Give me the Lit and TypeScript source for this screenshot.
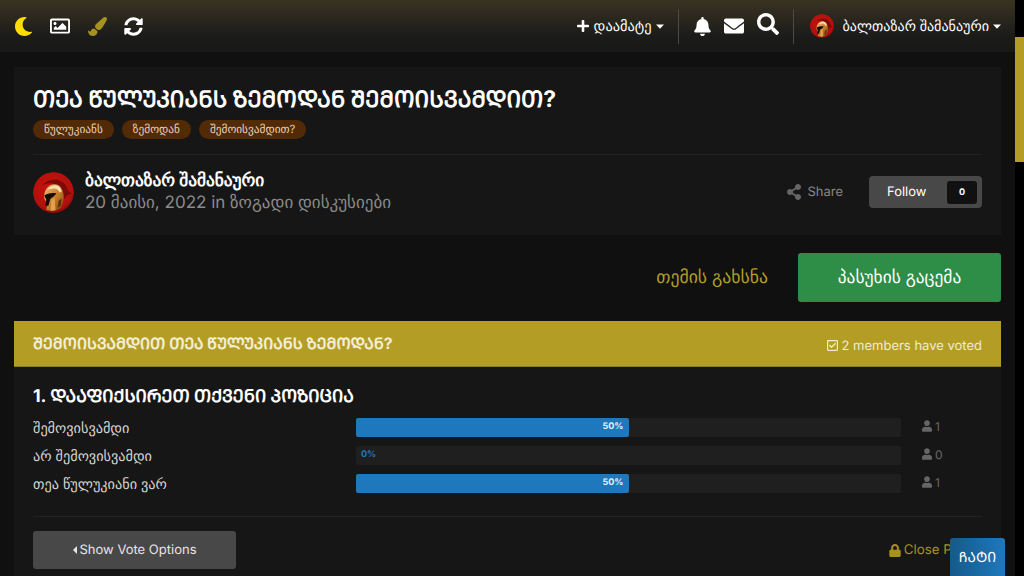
import { LitElement, html, css, svg } from "lit";
import { customElement } from "lit/decorators.js";

const P = {
  moon: ["0 0 512 512", "M283.211 512c78.962 0 151.079-35.925 198.857-94.792 7.068-8.708-.639-21.43-11.562-19.35-124.203 23.654-238.262-71.576-238.262-196.954 0-72.222 38.662-138.635 101.498-174.394 9.686-5.512 7.25-20.197-3.756-22.23A258.156 258.156 0 0 0 283.211 0c-141.309 0-256 114.511-256 256 0 141.309 114.511 256 256 256z"],
  image: ["0 0 512 512", "M464 64H48C21.49 64 0 85.49 0 112v288c0 26.51 21.49 48 48 48h416c26.51 0 48-21.49 48-48V112c0-26.51-21.49-48-48-48zm-6 336H54a6 6 0 0 1-6-6V118a6 6 0 0 1 6-6h404a6 6 0 0 1 6 6v276a6 6 0 0 1-6 6zM128 152c-22.091 0-40 17.909-40 40s17.909 40 40 40 40-17.909 40-40-17.909-40-40-40zM96 352h320v-80l-87.515-87.515c-4.686-4.686-12.284-4.686-16.971 0L192 304l-39.515-39.515c-4.686-4.686-12.284-4.686-16.971 0L96 304v48z"],
  brush: ["0 0 512 512", "M167.02 309.34c-40.12 2.58-76.53 17.86-97.19 72.3-2.35 6.21-8 9.98-14.59 9.98-11.11 0-45.46-27.67-55.25-34.35C0 439.62 37.93 512 128 512c75.86 0 128-43.77 128-120.19 0-3.11-.65-6.08-.97-9.13l-88.01-73.34zM457.89 0c-15.16 0-29.37 6.71-40.21 16.45C213.27 199.05 192 203.34 192 257.09c0 13.7 3.25 26.76 8.73 38.7l63.82 53.18c7.21 1.8 14.64 3.03 22.39 3.03 62.11 0 98.11-45.47 211.16-256.46 7.38-14.35 13.9-29.85 13.9-45.99C512 20.64 486 0 457.89 0z"],
  sync: ["0 0 512 512", "M370.72 133.28C339.458 104.008 298.888 87.962 255.848 88c-77.458.068-144.328 53.178-162.791 126.85-1.344 5.363-6.122 9.15-11.651 9.15H24.103c-7.498 0-13.194-6.807-11.807-14.176C33.933 94.924 134.813 8 256 8c66.448 0 126.791 26.136 171.315 68.685L463.03 40.97C478.149 25.851 504 36.559 504 57.941V192c0 13.255-10.745 24-24 24H345.941c-21.382 0-32.09-25.851-16.971-40.971l41.75-41.749zM32 296h134.059c21.382 0 32.09 25.851 16.971 40.971l-41.75 41.75c31.262 29.273 71.835 45.319 114.876 45.28 77.418-.07 144.315-53.144 162.787-126.849 1.344-5.363 6.122-9.15 11.651-9.15h57.304c7.498 0 13.194 6.807 11.807 14.176C478.067 417.076 377.187 504 256 504c-66.448 0-126.791-26.136-171.315-68.685L48.97 471.03C33.851 486.149 8 475.441 8 454.059V320c0-13.255 10.745-24 24-24z"],
  plus: ["0 0 448 512", "M416 208H272V64c0-17.67-14.33-32-32-32h-32c-17.67 0-32 14.33-32 32v144H32c-17.67 0-32 14.33-32 32v32c0 17.67 14.33 32 32 32h144v144c0 17.67 14.33 32 32 32h32c17.67 0 32-14.33 32-32V304h144c17.67 0 32-14.33 32-32v-32c0-17.67-14.33-32-32-32z"],
  bell: ["0 0 448 512", "M224 512c35.32 0 63.97-28.65 63.97-64H160.03c0 35.35 28.65 64 63.97 64zm215.39-149.71c-19.32-20.76-55.47-51.99-55.47-154.29 0-77.7-54.48-139.9-127.94-155.16V32c0-17.67-14.32-32-31.98-32s-31.98 14.33-31.98 32v20.84C118.56 68.1 64.08 130.3 64.08 208c0 102.3-36.15 133.53-55.47 154.29-6 6.45-8.66 14.16-8.61 21.71.11 16.4 12.98 32 32.1 32h383.8c19.12 0 32-15.6 32.1-32 .05-7.55-2.61-15.27-8.61-21.71z"],
  env: ["0 0 512 512", "M502.3 190.8c3.9-3.1 9.7-.2 9.7 4.7V400c0 26.5-21.5 48-48 48H48c-26.5 0-48-21.5-48-48V195.6c0-5 5.7-7.8 9.7-4.7 22.4 17.4 52.1 39.5 154.1 113.6 21.1 15.4 56.7 47.8 92.2 47.6 35.7.3 72-32.8 92.3-47.6 102-74.1 131.6-96.3 154-113.7zM256 320c23.2.4 56.6-29.2 73.4-41.4 132.7-96.3 142.8-104.7 173.4-128.7 5.8-4.5 9.2-11.5 9.2-18.9v-19c0-26.5-21.5-48-48-48H48C21.5 64 0 85.5 0 112v19c0 7.4 3.4 14.3 9.2 18.9 30.6 23.9 40.7 32.4 173.4 128.7 16.8 12.2 50.2 41.8 73.4 41.4z"],
  search: ["0 0 512 512", "M505 442.7L405.3 343c-4.5-4.5-10.6-7-17-7H372c27.6-35.3 44-79.7 44-128C416 93.1 322.9 0 208 0S0 93.1 0 208s93.1 208 208 208c48.3 0 92.7-16.4 128-44v16.3c0 6.4 2.5 12.5 7 17l99.7 99.7c9.4 9.4 24.6 9.4 33.9 0l28.3-28.3c9.4-9.4 9.4-24.6.1-34zM208 336c-70.7 0-128-57.2-128-128 0-70.7 57.2-128 128-128 70.7 0 128 57.2 128 128 0 70.7-57.2 128-128 128z"],
  share: ["0 0 448 512", "M352 320c-22.608 0-43.387 7.819-59.79 20.895l-102.486-64.054a96.551 96.551 0 0 0 0-41.683l102.486-64.054C308.613 184.181 329.392 192 352 192c53.019 0 96-42.981 96-96S405.019 0 352 0s-96 42.981-96 96c0 7.158.79 14.13 2.276 20.841L155.79 180.895C139.387 167.819 118.608 160 96 160c-53.019 0-96 42.981-96 96s42.981 96 96 96c22.608 0 43.387-7.819 59.79-20.895l102.486 64.054A96.301 96.301 0 0 0 256 416c0 53.019 42.981 96 96 96s96-42.981 96-96-42.981-96-96-96z"],
  user: ["0 0 448 512", "M224 256c70.7 0 128-57.3 128-128S294.7 0 224 0 96 57.3 96 128s57.3 128 128 128zm89.6 32h-16.7c-22.2 10.2-46.9 16-72.9 16s-50.6-5.8-72.9-16h-16.7C60.2 288 0 348.2 0 422.4V464c0 26.5 21.5 48 48 48h352c26.5 0 48-21.5 48-48v-41.6c0-74.2-60.2-134.4-134.4-134.4z"],
  lock: ["0 0 448 512", "M400 224h-24v-72C376 68.2 307.8 0 224 0S72 68.2 72 152v72H48c-26.5 0-48 21.5-48 48v192c0 26.5 21.5 48 48 48h352c26.5 0 48-21.5 48-48V272c0-26.5-21.5-48-48-48zm-104 0H152v-72c0-39.7 32.3-72 72-72s72 32.3 72 72v72z"],
  check: ["0 0 448 512", "M400 32H48C21.49 32 0 53.49 0 80v352c0 26.51 21.49 48 48 48h352c26.51 0 48-21.49 48-48V80c0-26.51-21.49-48-48-48zm0 400H48V80h352v352zm-35.864-241.724L191.547 361.48c-4.705 4.667-12.303 4.637-16.97-.068l-90.781-91.516c-4.667-4.705-4.637-12.303.069-16.971l22.719-22.536c4.705-4.667 12.303-4.637 16.97.069l59.792 60.277 141.352-140.216c4.705-4.667 12.303-4.637 16.97.068l22.536 22.718c4.667 4.706 4.637 12.304-.068 16.971z"],
} as const;

const icon = (n: keyof typeof P, cls: string) =>
  html`<svg class="i ${cls}" viewBox=${P[n][0]} fill="currentColor"><path d=${P[n][1]}></path></svg>`;

const caret = (cls = "") =>
  html`<svg class="caret ${cls}" viewBox="0 0 8 5" fill="currentColor"><path d="M0 .4h8L4 4.8z"></path></svg>`;

let uid = 0;
const avatar = (cls: string) => {
  const id = `av${uid++}`;
  return html`<svg class="avatar ${cls}" viewBox="0 0 40 40">
    <defs>
      <radialGradient id="${id}r" cx="0.45" cy="0.4" r="0.65"><stop offset="0" stop-color="#c9140e"></stop><stop offset="0.8" stop-color="#b0100c"></stop><stop offset="1" stop-color="#6e0a08"></stop></radialGradient>
      <linearGradient id="${id}g" x1="0" y1="0" x2="1" y2="1"><stop offset="0" stop-color="#eec080"></stop><stop offset="0.55" stop-color="#c47a28"></stop><stop offset="1" stop-color="#7d3f10"></stop></linearGradient>
    </defs>
    <circle cx="20" cy="20" r="20" fill="url(#${id}r)"></circle>
    ${svg`<path d="M9 13c6-7 17-8 23 0l3 6 3 2-5 2-2 3-3-1c1-6-1-11-6-13-4-2-9-1-13 1z" fill="#7c0b08"></path>
    <path d="M11 26c-1-8 4-14 10-14 6 0 9 6 9 13l-1 5-2 5-6 3-8-1 1-6z" fill="url(#${id}g)"></path>
    <path d="M14 17c2-3 5-4 8-4 3 0 5 2 6 6l-2 1c-1-3-3-4-6-4z" fill="#f6dfae"></path>
    <path d="M11 23c3-2 7-3 12-2l-3 3-3 2-2 7h-3l1-6z" fill="#170b06"></path>
    <path d="M18 27l3-2 1 12-5 1z" fill="#e0a050"></path>
    <path d="M25 28l3-2-1 7-3 2z" fill="#5e2e0c"></path>`}
  </svg>`;
};

@customElement("app-root")
export class AppRoot extends LitElement {
  static styles = css`
    :host { display: block; width: 1024px; height: 576px; overflow: hidden; position: relative; background: #000;
      font-family: Inter, sans-serif; color: #fff; text-rendering: geometricPrecision; }
    .shell { display: flex; height: 576px; }
    .page { width: 1015px; height: 576px; background: #101010; overflow: hidden; flex: none; }
    .bar { width: 9px; flex: none; background: #000; }
    .thumb { margin-top: 37px; height: 125px; background: #b49d25; }
    .i { display: block; flex: none; }
    .caret { display: block; flex: none; width: 8px; height: 5px; }

    nav { height: 52px; display: flex; align-items: center; padding: 0 14px 0 14px;
      background: linear-gradient(#3a3322 0%, #1b1b1a 70%, #181818 100%); box-sizing: border-box; }
    .left { display: flex; align-items: center; }
    .moon { width: 19px; height: 19px; color: #ffdd00; margin-right: 17px; }
    .img { width: 20px; height: 20px; margin-right: 18px; }
    .brush { width: 19px; height: 19px; color: #a8921f; margin-right: 17px; }
    .sync { width: 19px; height: 19px; }
    .right { margin-left: auto; display: flex; align-items: center; }
    .add { display: flex; align-items: center; font-size: 14.4px; }
    .plus { width: 12px; height: 14px; margin-right: 5px; }
    .add .caret, .me .caret { margin-left: 4px; }
    .sep { width: 1px; height: 35px; background: #4a4a47; margin: 0 15px 0 14px; }
    .bell { width: 17px; height: 19px; margin-right: 13px; }
    .env { width: 20px; height: 20px; margin-right: 13px; }
    .search { width: 22px; height: 22px; margin-top: -4px; }
    .nav-av { width: 24px; height: 24px; margin: 0 9px 0 1px; }
    .avatar { display: block; flex: none; border-radius: 50%; }
    .me { font-size: 14.1px; display: flex; align-items: center; font-weight: 500; }

    main { padding: 15px 14px 0; }
    .card { background: #161616; padding: 16px 19px 0; height: 168px; box-sizing: border-box; }
    h1 { margin: 0; font-size: 22.9px; line-height: 32px; font-weight: 700; }
    .tags { display: flex; gap: 8px; margin-top: 5px; }
    .tag { height: 19px; line-height: 19px; padding: 0 11px; background: #522a06; color: #e6d3bd; border-radius: 10px; font-size: 11.3px; }
    .author { margin-top: 15px; border-top: 1px solid #222; padding-top: 14px; display: flex; align-items: center; }
    .big-av { width: 41px; height: 41px; margin-right: 11px; }
    .name { font-size: 17.3px; line-height: 22px; padding-top: 1px; font-weight: 600; }
    .date { font-size: 17px; line-height: 23px; color: #8a8a8a; }
    .actions { margin-left: auto; display: flex; align-items: center; }
    .share { display: flex; align-items: center; font-size: 13px; color: #888; margin-right: 26px; }
    .share .i { width: 14px; height: 16px; margin-right: 6px; color: #666; }
    .follow { width: 113px; height: 32px; background: #484848; border-radius: 4px; display: flex; align-items: center;
      justify-content: space-between; padding: 0 5px 0 18px; box-sizing: border-box; font-size: 13px; }
    .count { width: 30px; height: 23px; background: #111; border-radius: 3px; text-align: center; line-height: 23px; font-size: 9px; font-weight: 700; }

    .reply-row { display: flex; justify-content: flex-end; align-items: center; margin-top: 18px; height: 49px; }
    .link { color: #b49d25; font-size: 17.7px; margin-right: 30px; }
    .reply { width: 203px; height: 49px; border-radius: 3px; background: #2e8d47; display: flex; align-items: center; justify-content: center; font-size: 17.4px; }

    .poll { margin-top: 19px; background: #161616; height: 300px; }
    .poll-head { height: 46px; background: #b49d25; display: flex; align-items: center; justify-content: space-between; padding: 0 19px; box-sizing: border-box;
      border-bottom: 1px solid #8f7c1c; }
    .poll-head h2 { margin: 0; font-size: 15.74px; font-weight: 700; color: #f3efd6; margin-top: -2px; }
    .voted { display: flex; align-items: center; font-size: 13px; color: #f0ecd0; margin-top: 4px; }
    .voted .i { width: 11px; height: 13px; margin-right: 4px; }
    .poll-body { padding: 17px 19px 0; }
    h3 { margin: 0; font-size: 17.67px; line-height: 26px; font-weight: 700; }
    .rows { margin-top: 8px; display: grid; gap: 9px; }
    .row { display: grid; grid-template-columns: 323px 545px 1fr; align-items: center; height: 19px; font-size: 14.25px; color: #d4d4d4; }
    .label { padding-top: 2px; }
    .track { height: 19px; background: #1f1f1f; border-radius: 2px; position: relative; }
    .fill { height: 19px; background: #1f78bc; border-radius: 2px; display: flex; justify-content: flex-end; align-items: center; padding: 0 5px 2px 0; box-sizing: border-box;
      font-size: 9px; font-weight: 700; color: #e7eef4; }
    .zero { height: 19px; padding: 0 0 2px 5px; box-sizing: border-box; display: flex; align-items: center; font-size: 9px; font-weight: 700; color: #1f78bc; }
    .votes { display: flex; align-items: center; padding-left: 21px; margin-top: -3px; color: #666; font-size: 12px; }
    .votes .i { width: 10px; height: 12px; margin-right: 3px; }
    .foot { margin-top: 23px; border-top: 1px solid #222; padding-top: 14px; display: flex; justify-content: space-between; align-items: center; }
    .vote-btn { width: 203px; height: 38px; background: #484848; border-radius: 3px; display: flex; align-items: center; justify-content: center; font-size: 13px; color: #e6e6e6; }
    .vote-btn svg { width: 4px; height: 8px; margin-right: 3px; }
    .close { display: flex; align-items: center; color: #a8921f; font-size: 13.3px; margin-right: 16px; }
    .close .i { width: 12px; height: 13px; margin-right: 3px; }

    .chat { position: absolute; left: 950px; top: 538px; width: 55px; height: 38px; border-radius: 3px 3px 0 0;
      background: linear-gradient(90deg, #155a8a, #1f78bc); display: flex; align-items: center; justify-content: center;
      font-size: 14px; }
  `;

  row(label: string, pct: number, votes: number) {
    return html`<div class="row">
      <div class="label">${label}</div>
      <div class="track">
        ${pct
          ? html`<div class="fill" style="width:${pct}%">${pct}%</div>`
          : html`<div class="zero">0%</div>`}
      </div>
      <div class="votes">${icon("user", "")}${votes}</div>
    </div>`;
  }

  render() {
    return html`
      <div class="shell">
        <div class="page">
          <nav>
            <div class="left">
              ${icon("moon", "moon")}${icon("image", "img")}${icon("brush", "brush")}${icon("sync", "sync")}
            </div>
            <div class="right">
              <div class="add">${icon("plus", "plus")}დაამატე${caret()}</div>
              <div class="sep"></div>
              ${icon("bell", "bell")}${icon("env", "env")}${icon("search", "search")}
              <div class="sep"></div>
              <div class="me">${avatar("nav-av")}ბალთაზარ შამანაური${caret()}</div>
            </div>
          </nav>
          <main>
            <section class="card">
              <h1>ᲗᲔᲐ ᲬᲣᲚᲣᲙᲘᲐᲜᲡ ᲖᲔᲛᲝᲓᲐᲜ ᲨᲔᲛᲝᲘᲡᲕᲐᲛᲓᲘᲗ?</h1>
              <div class="tags">
                <span class="tag">წულუკიანს</span><span class="tag">ზემოდან</span><span class="tag">შემოისვამდით?</span>
              </div>
              <div class="author">
                ${avatar("big-av")}
                <div>
                  <div class="name">ბალთაზარ შამანაური</div>
                  <div class="date">20 მაისი, 2022 in ზოგადი დისკუსიები</div>
                </div>
                <div class="actions">
                  <div class="share">${icon("share", "")}Share</div>
                  <div class="follow">Follow<span class="count">0</span></div>
                </div>
              </div>
            </section>
            <div class="reply-row">
              <span class="link">თემის გახსნა</span>
              <div class="reply">პასუხის გაცემა</div>
            </div>
            <section class="poll">
              <div class="poll-head">
                <h2>ᲨᲔᲛᲝᲘᲡᲕᲐᲛᲓᲘᲗ ᲗᲔᲐ ᲬᲣᲚᲣᲙᲘᲐᲜᲡ ᲖᲔᲛᲝᲓᲐᲜ?</h2>
                <div class="voted">${icon("check", "")}2 members have voted</div>
              </div>
              <div class="poll-body">
                <h3>1. ᲓᲐᲐᲤᲘᲥᲡᲘᲠᲔᲗ ᲗᲥᲕᲔᲜᲘ ᲞᲝᲖᲘᲪᲘᲐ</h3>
                <div class="rows">
                  ${this.row("შემოვისვამდი", 50, 1)}
                  ${this.row("არ შემოვისვამდი", 0, 0)}
                  ${this.row("თეა წულუკიანი ვარ", 50, 1)}
                </div>
                <div class="foot">
                  <div class="vote-btn"><svg viewBox="0 0 4 8" fill="currentColor"><path d="M4 0v8L0 4z"></path></svg>Show Vote Options</div>
                  <div class="close">${icon("lock", "")}Close Poll</div>
                </div>
              </div>
            </section>
          </main>
        </div>
        <div class="bar"><div class="thumb"></div></div>
      </div>
      <div class="chat">ᲩᲐᲢᲘ</div>
    `;
  }
}
